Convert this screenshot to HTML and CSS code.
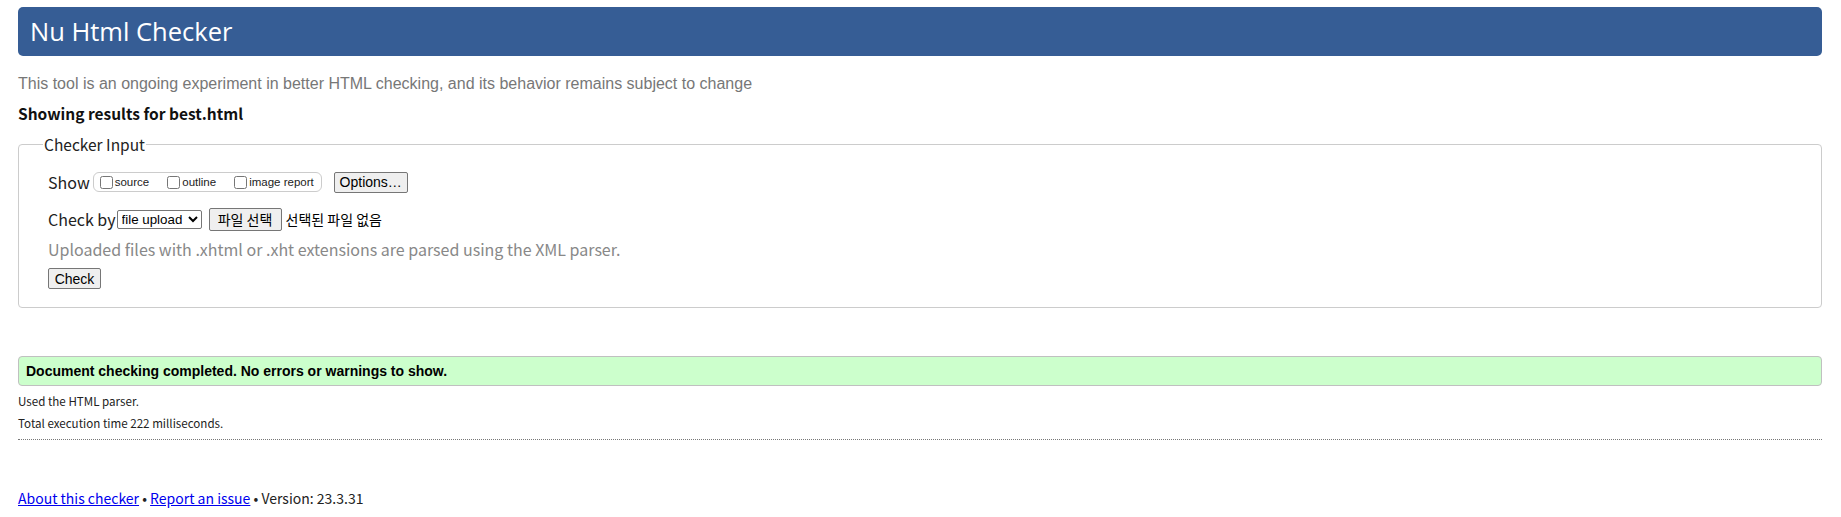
FILE: index.html
```html
<!DOCTYPE html>
<html lang="en">
<head>
<meta charset="utf-8">
<title>Nu Html Checker</title>
<link rel="stylesheet" href="styles.css">
</head>
<body>
<header class="masthead"><h1 class="title">Nu Html Checker</h1></header>
<p class="intro">This tool is an ongoing experiment in better HTML checking, and its behavior remains subject to change</p>
<p class="showing">Showing results for best.html</p>
<fieldset class="input-box">
  <legend class="legend">Checker Input</legend>
  <div class="row show-row">
    <span class="row-label">Show</span>
    <span class="opts">
      <label class="opt"><input type="checkbox" class="cb"><span>source</span></label>
      <label class="opt"><input type="checkbox" class="cb"><span>outline</span></label>
      <label class="opt"><input type="checkbox" class="cb"><span>image report</span></label>
    </span>
    <button class="btn options-btn" type="button">Options…</button>
  </div>
  <div class="row checkby-row">
    <span class="row-label">Check by</span>
    <select class="sel"><option>file upload</option></select>
    <button class="btn file-btn" type="button">파일 선택</button>
    <span class="nofile">선택된 파일 없음</span>
  </div>
  <p class="hint">Uploaded files with .xhtml or .xht extensions are parsed using the XML parser.</p>
  <div class="row"><button class="btn check-btn" type="button">Check</button></div>
</fieldset>
<div class="success">Document checking completed. No errors or warnings to show.</div>
<p class="stat">Used the HTML parser.</p>
<p class="stat">Total execution time 222 milliseconds.</p>
<hr class="sep">
<footer class="foot"><a href="#" class="link">About this checker</a> • <a href="#" class="link">Report an issue</a> • Version: 23.3.31</footer>
</body>
</html>
```
FILE: styles.css
```css
html, body { background: #fff; }
body {
  margin: 0;
  padding: 7px 19px 0 18px;
  font-family: "Noto Sans CJK KR", "Noto Sans", sans-serif;
  color: #222;
}
.masthead {
  background: #365d95;
  border-radius: 5px;
  height: 49px;
  display: flex;
  align-items: center;
}
.title {
  margin: 0 0 0 12px;
  font-family: "Open Sans", "Noto Sans", sans-serif;
  font-weight: 400;
  font-size: 25.5px;
  color: #fff;
  line-height: 1;
}
.intro {
  margin: 19px 0 0;
  font-family: "Liberation Sans", Arial, sans-serif;
  font-size: 16px;
  line-height: 18px;
  color: #777;
}
.showing {
  margin: 10px 0 0;
  font-weight: 700;
  font-size: 15.5px;
  line-height: 20px;
  color: #111;
}
.input-box {
  margin: 10px 0 0;
  border: 1px solid #ccc;
  border-radius: 4px;
  padding: 10px 29px 18px;
}
.legend {
  padding: 0 1px;
  margin-left: -5px;
  font-size: 15.5px;
  color: #222;
}
.row {
  display: flex;
  align-items: center;
}
.show-row { height: 22px; margin-top: 6px; }
.checkby-row { height: 24px; margin-top: 14px; }
.row-label { font-size: 16px; color: #222; }
.show-row .row-label { margin-right: 3px; }
.checkby-row .row-label { margin-right: 1px; }
.opts {
  display: flex;
  align-items: center;
  border: 1px solid #ccc;
  border-radius: 6px;
  height: 20px;
  box-sizing: border-box;
  padding: 0 7px 0 6px;
  gap: 18px;
  white-space: nowrap;
}
.opt {
  display: flex;
  align-items: center;
  font-family: "Liberation Sans", Arial, sans-serif;
  font-size: 11.5px;
  white-space: nowrap;
}
.cb { margin: 0 2px 0 0; width: 13px; height: 13px; }
.btn {
  font-family: "Liberation Sans", Arial, sans-serif;
  font-size: 13.333px;
  background: #efefef;
  border: 1px solid #767676;
  border-radius: 2px;
  color: #000;
  padding: 1px 6px;
}
.options-btn { margin-left: 12px; height: 21px; width: 74px; padding: 0; font-size: 14px; }
.sel {
  font-family: "Liberation Sans", Arial, sans-serif;
  font-size: 13.333px;
  height: 19px;
  width: 85px;
  border: 1px solid #767676;
  border-radius: 2px;
  background: #fff;
  color: #000;
}
.file-btn {
  margin-left: 7px;
  height: 23px;
  width: 73px;
  padding: 0;
  font-family: "Noto Sans CJK KR", sans-serif;
  font-size: 14px;
}
.nofile {
  margin-left: 4px;
  font-family: "Noto Sans CJK KR", sans-serif;
  font-size: 14px;
  color: #000;
}
.hint {
  margin: 8px 0 0;
  font-size: 16px;
  line-height: 20px;
  color: #888;
}
.check-btn { margin-top: 9px; height: 21px; width: 53px; padding: 0; font-size: 14px; }
.success {
  margin-top: 48px;
  background: #ccffcc;
  border: 1px solid #c0c0c0;
  border-radius: 4px;
  height: 28px;
  display: flex;
  align-items: center;
  padding-left: 7px;
  font-family: "Liberation Sans", Arial, sans-serif;
  font-weight: 700;
  font-size: 14px;
  color: #000;
}
.stat {
  margin: 8px 0 0;
  font-size: 11.6px;
  line-height: 15px;
  color: #222;
}
.stat + .stat { margin-top: 7px; }
.sep {
  margin: 8px 0 0;
  border: 0;
  border-top: 1px dotted #777;
  height: 0;
}
.foot {
  margin-top: 48px;
  font-size: 14px;
  color: #222;
}
.link { color: #00e; text-decoration: underline; }
```
